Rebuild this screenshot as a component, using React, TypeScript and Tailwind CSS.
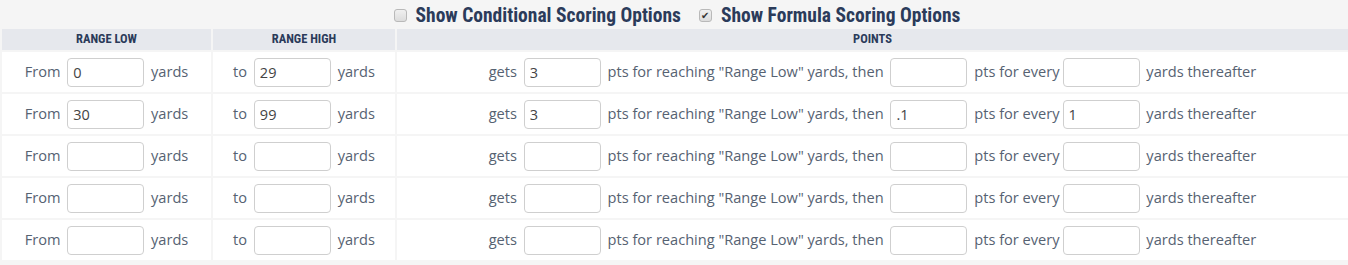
import React from 'react';

type Row = { low: string; high: string; reach: string; pts: string; every: string };

const rows: Row[] = [
  { low: '0', high: '29', reach: '3', pts: '', every: '' },
  { low: '30', high: '99', reach: '3', pts: '.1', every: '1' },
  { low: '', high: '', reach: '', pts: '', every: '' },
  { low: '', high: '', reach: '', pts: '', every: '' },
  { low: '', high: '', reach: '', pts: '', every: '' },
];

function Box({ value }: { value: string }) {
  return (
    <input
      readOnly
      value={value}
      className="w-[77px] h-[29px] mx-[3px] px-[5px] border border-[#cfcfcf] rounded-[4px] bg-white text-[14.5px] text-[#444] outline-none"
    />
  );
}

function Check({ checked, label }: { checked?: boolean; label: string }) {
  return (
    <label className="flex items-center gap-[9px]">
      <span className="w-[13px] h-[13px] rounded-[3px] border border-[#b9b9b9] bg-gradient-to-b from-[#f0f0f0] to-[#dcdcdc] flex items-center justify-center text-[10px] leading-none text-[#333]">
        {checked ? '✔' : ''}
      </span>
      <span className="text-[19.5px] font-bold text-[#2b3b5a] [font-stretch:condensed]">{label}</span>
    </label>
  );
}

export default function App() {
  const head = "h-[21px] bg-[#e6e8ed] flex items-center justify-center text-[12.5px] font-bold uppercase text-[#2b3b5a] [font-stretch:condensed] font-['Roboto_Condensed','Roboto',sans-serif]";
  const cell = 'h-[40px] bg-white flex items-center justify-center whitespace-pre text-[14.6px] text-[#566272]';
  return (
    <div className="w-[1348px] h-[265px] bg-[#f5f5f5] overflow-hidden font-['Open_Sans',sans-serif]">
      <div className="h-[29px] flex items-center justify-center gap-[18px] pl-[6px] pt-[2px] font-['Roboto_Condensed','Roboto',sans-serif]">
        <Check label="Show Conditional Scoring Options" />
        <Check checked label="Show Formula Scoring Options" />
      </div>
      <div className="grid grid-cols-[209px_182px_1fr] gap-[2px] pl-[2px]">
        <div className={head}>Range Low</div>
        <div className={head}>Range High</div>
        <div className={head}>Points</div>
        {rows.map((r, i) => (
          <React.Fragment key={i}>
            <div className={cell}>
              From <Box value={r.low} /> yards
            </div>
            <div className={cell}>
              to <Box value={r.high} /> yards
            </div>
            <div className={cell}>
              gets <Box value={r.reach} /> pts for reaching "Range Low" yards, then <Box value={r.pts} /> pts for every
              <Box value={r.every} /> yards thereafter
            </div>
          </React.Fragment>
        ))}
      </div>
    </div>
  );
}
